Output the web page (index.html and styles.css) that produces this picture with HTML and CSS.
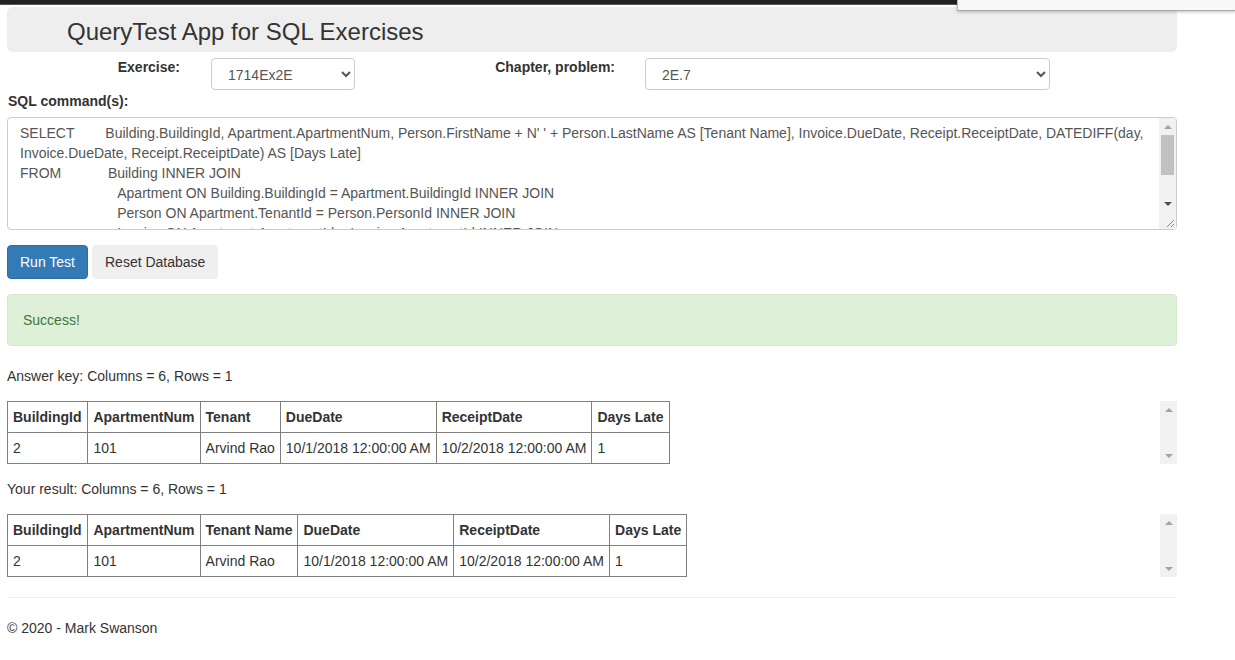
FILE: index.html
```html
<!DOCTYPE html>
<html>
<head>
<meta charset="utf-8">
<title>QueryTest App</title>
<link rel="stylesheet" href="styles.css">
</head>
<body>
<div class="topbar"></div>
<div class="popup"></div>
<div class="container">
  <div class="jumbotron"><h1>QueryTest App for SQL Exercises</h1></div>
  <div class="pick-row">
    <label class="lbl lbl-ex">Exercise:</label>
    <select class="form-control sel-ex"><option>1714Ex2E</option></select>
    <label class="lbl lbl-ch">Chapter, problem:</label>
    <select class="form-control sel-ch"><option>2E.7</option></select>
  </div>
  <label class="lbl lbl-sql">SQL command(s):</label>
  <div class="sql-box">
    <textarea class="sql" spellcheck="false">SELECT        Building.BuildingId, Apartment.ApartmentNum, Person.FirstName + N' ' + Person.LastName AS [Tenant Name], Invoice.DueDate, Receipt.ReceiptDate, DATEDIFF(day, Invoice.DueDate, Receipt.ReceiptDate) AS [Days Late]
FROM            Building INNER JOIN
                         Apartment ON Building.BuildingId = Apartment.BuildingId INNER JOIN
                         Person ON Apartment.TenantId = Person.PersonId INNER JOIN
                         Invoice ON Apartment.ApartmentId = Invoice.ApartmentId INNER JOIN
                         Receipt ON Invoice.InvoiceId = Receipt.InvoiceId</textarea>
    <div class="vscroll vscroll-sql">
      <div class="arr"><svg width="8" height="4" viewBox="0 0 8 4"><path d="M0 4 L4 0 L8 4 Z" fill="#a3a3a3"/></svg></div>
      <div class="track"><div class="thumb"></div></div>
      <div class="arr"><svg width="8" height="4" viewBox="0 0 8 4"><path d="M0 0 L8 0 L4 4 Z" fill="#505050"/></svg></div>
      <div class="resizer"><svg width="17" height="17" viewBox="0 0 17 17"><path d="M15 8 L8 15 M15 12 L12 15" stroke="#8a8a8a" stroke-width="1" fill="none"/></svg></div>
    </div>
  </div>
  <div class="btn-row">
    <button class="btn btn-primary">Run Test</button>
    <button class="btn btn-default">Reset Database</button>
  </div>
  <div class="alert">Success!</div>
  <p class="caption">Answer key: Columns = 6, Rows = 1</p>
  <div class="tbl-wrap">
    <div class="tbl-area">
      <table class="grid">
        <tr><th>BuildingId</th><th>ApartmentNum</th><th>Tenant</th><th>DueDate</th><th>ReceiptDate</th><th>Days Late</th></tr>
        <tr><td>2</td><td>101</td><td>Arvind Rao</td><td>10/1/2018 12:00:00 AM</td><td>10/2/2018 12:00:00 AM</td><td>1</td></tr>
      </table>
    </div>
    <div class="vscroll">
      <div class="arr"><svg width="8" height="4" viewBox="0 0 8 4"><path d="M0 4 L4 0 L8 4 Z" fill="#a3a3a3"/></svg></div>
      <div class="track"></div>
      <div class="arr"><svg width="8" height="4" viewBox="0 0 8 4"><path d="M0 0 L8 0 L4 4 Z" fill="#a3a3a3"/></svg></div>
    </div>
  </div>
  <p class="caption">Your result: Columns = 6, Rows = 1</p>
  <div class="tbl-wrap">
    <div class="tbl-area">
      <table class="grid">
        <tr><th>BuildingId</th><th>ApartmentNum</th><th>Tenant Name</th><th>DueDate</th><th>ReceiptDate</th><th>Days Late</th></tr>
        <tr><td>2</td><td>101</td><td>Arvind Rao</td><td>10/1/2018 12:00:00 AM</td><td>10/2/2018 12:00:00 AM</td><td>1</td></tr>
      </table>
    </div>
    <div class="vscroll">
      <div class="arr"><svg width="8" height="4" viewBox="0 0 8 4"><path d="M0 4 L4 0 L8 4 Z" fill="#a3a3a3"/></svg></div>
      <div class="track"></div>
      <div class="arr"><svg width="8" height="4" viewBox="0 0 8 4"><path d="M0 0 L8 0 L4 4 Z" fill="#a3a3a3"/></svg></div>
    </div>
  </div>
  <hr class="rule">
  <footer class="footer">© 2020 - Mark Swanson</footer>
</div>
</body>
</html>
```

FILE: styles.css
```css
html, body {
  margin: 0;
  padding: 0;
  background: #fff;
}
body {
  font-family: "Liberation Sans", Arial, sans-serif;
  font-size: 14px;
  line-height: 20px;
  color: #333;
}
.topbar {
  height: 4px;
  background: #222;
  border-bottom: 1px solid #555;
}
.popup {
  position: absolute;
  top: 0;
  left: 957px;
  width: 278px;
  height: 11px;
  background: #f8f9fa;
  border-left: 1px solid #bbb;
  border-bottom: 1px solid #aaa;
  box-shadow: 0 1px 3px rgba(0,0,0,0.25);
  box-sizing: border-box;
}
.container {
  width: 1170px;
  margin-left: 7px;
  padding-top: 2px;
}
.jumbotron {
  background: #eee;
  border-radius: 6px;
  height: 45px;
  padding-left: 60px;
  display: flex;
  align-items: center;
}
.jumbotron h1 {
  margin: 0;
  font-size: 24px;
  font-weight: normal;
  line-height: 28px;
  padding-top: 4px;
  color: #333;
}
.pick-row {
  display: flex;
  align-items: flex-start;
  margin-top: 5px;
  height: 34px;
}
.lbl {
  font-weight: bold;
  display: block;
}
.lbl-ex {
  width: 173px;
  text-align: right;
  margin-right: 31px;
}
.lbl-ch {
  width: 260px;
  text-align: right;
  margin-right: 30px;
}
.form-control {
  height: 32px;
  margin-top: 1px;
  border: 1px solid #ccc;
  border-radius: 4px;
  background: #fff;
  color: #555;
  font-family: "Liberation Sans", Arial, sans-serif;
  font-size: 14px;
  padding: 5px 12px 3px 12px;
  box-sizing: border-box;
}
.sel-ex { width: 144px; }
.sel-ch { width: 405px; }
.lbl-sql {
  margin-bottom: 6px;
  margin-left: 1px;
}
.sql-box {
  position: relative;
  width: 1170px;
  height: 113px;
}
.sql {
  display: block;
  width: 1170px;
  height: 113px;
  box-sizing: border-box;
  border: 1px solid #ccc;
  border-radius: 4px;
  padding: 5px 29px 5px 12px;
  font-family: "Liberation Sans", Arial, sans-serif;
  font-size: 14px;
  line-height: 20px;
  color: #555;
  resize: none;
  overflow: hidden;
  margin: 0;
}
.vscroll {
  width: 17px;
  background: #f1f1f1;
  display: flex;
  flex-direction: column;
  flex: none;
}
.vscroll-sql {
  position: absolute;
  top: 1px;
  right: 1px;
  bottom: 1px;
  border-top-right-radius: 3px;
  border-bottom-right-radius: 3px;
}
.arr {
  height: 17px;
  display: flex;
  align-items: center;
  justify-content: center;
  flex: none;
}
.arr svg { display: block; }
.track {
  flex: 1;
  padding: 0 2px;
}
.thumb {
  height: 40px;
  background: #c1c1c1;
}
.resizer {
  height: 17px;
  flex: none;
  background: #f1f1f1;
}
.resizer svg { display: block; }
.btn-row {
  display: flex;
  gap: 4px;
  margin-top: 15px;
}
.btn {
  height: 34px;
  padding: 6px 12px;
  font-family: "Liberation Sans", Arial, sans-serif;
  font-size: 14px;
  line-height: 20px;
  border-radius: 4px;
  box-sizing: border-box;
  cursor: pointer;
}
.btn-primary {
  background: #337ab7;
  border: 1px solid #2e6da4;
  color: #fff;
}
.btn-default {
  background: #efefef;
  border: 1px solid #efefef;
  color: #333;
}
.alert {
  margin-top: 15px;
  margin-bottom: 20px;
  padding: 15px;
  background: #dff0d8;
  border: 1px solid #d6e9c6;
  border-radius: 4px;
  color: #3c763d;
}
.caption {
  margin: 0 0 15px 0;
}
.tbl-wrap {
  height: 63px;
  display: flex;
  margin-bottom: 15px;
}
.tbl-area {
  flex: 1;
  overflow: hidden;
}
.grid {
  border-collapse: collapse;
}
.grid th, .grid td {
  border: 1px solid #808080;
  padding: 5px;
  text-align: left;
  white-space: nowrap;
}
.grid th:first-child, .grid td:first-child { padding-right: 6px; }
.grid th { font-weight: bold; }
.rule {
  border: 0;
  border-top: 1px solid #eee;
  margin: 20px 0;
}
.footer {
  line-height: 20px;
}
```
